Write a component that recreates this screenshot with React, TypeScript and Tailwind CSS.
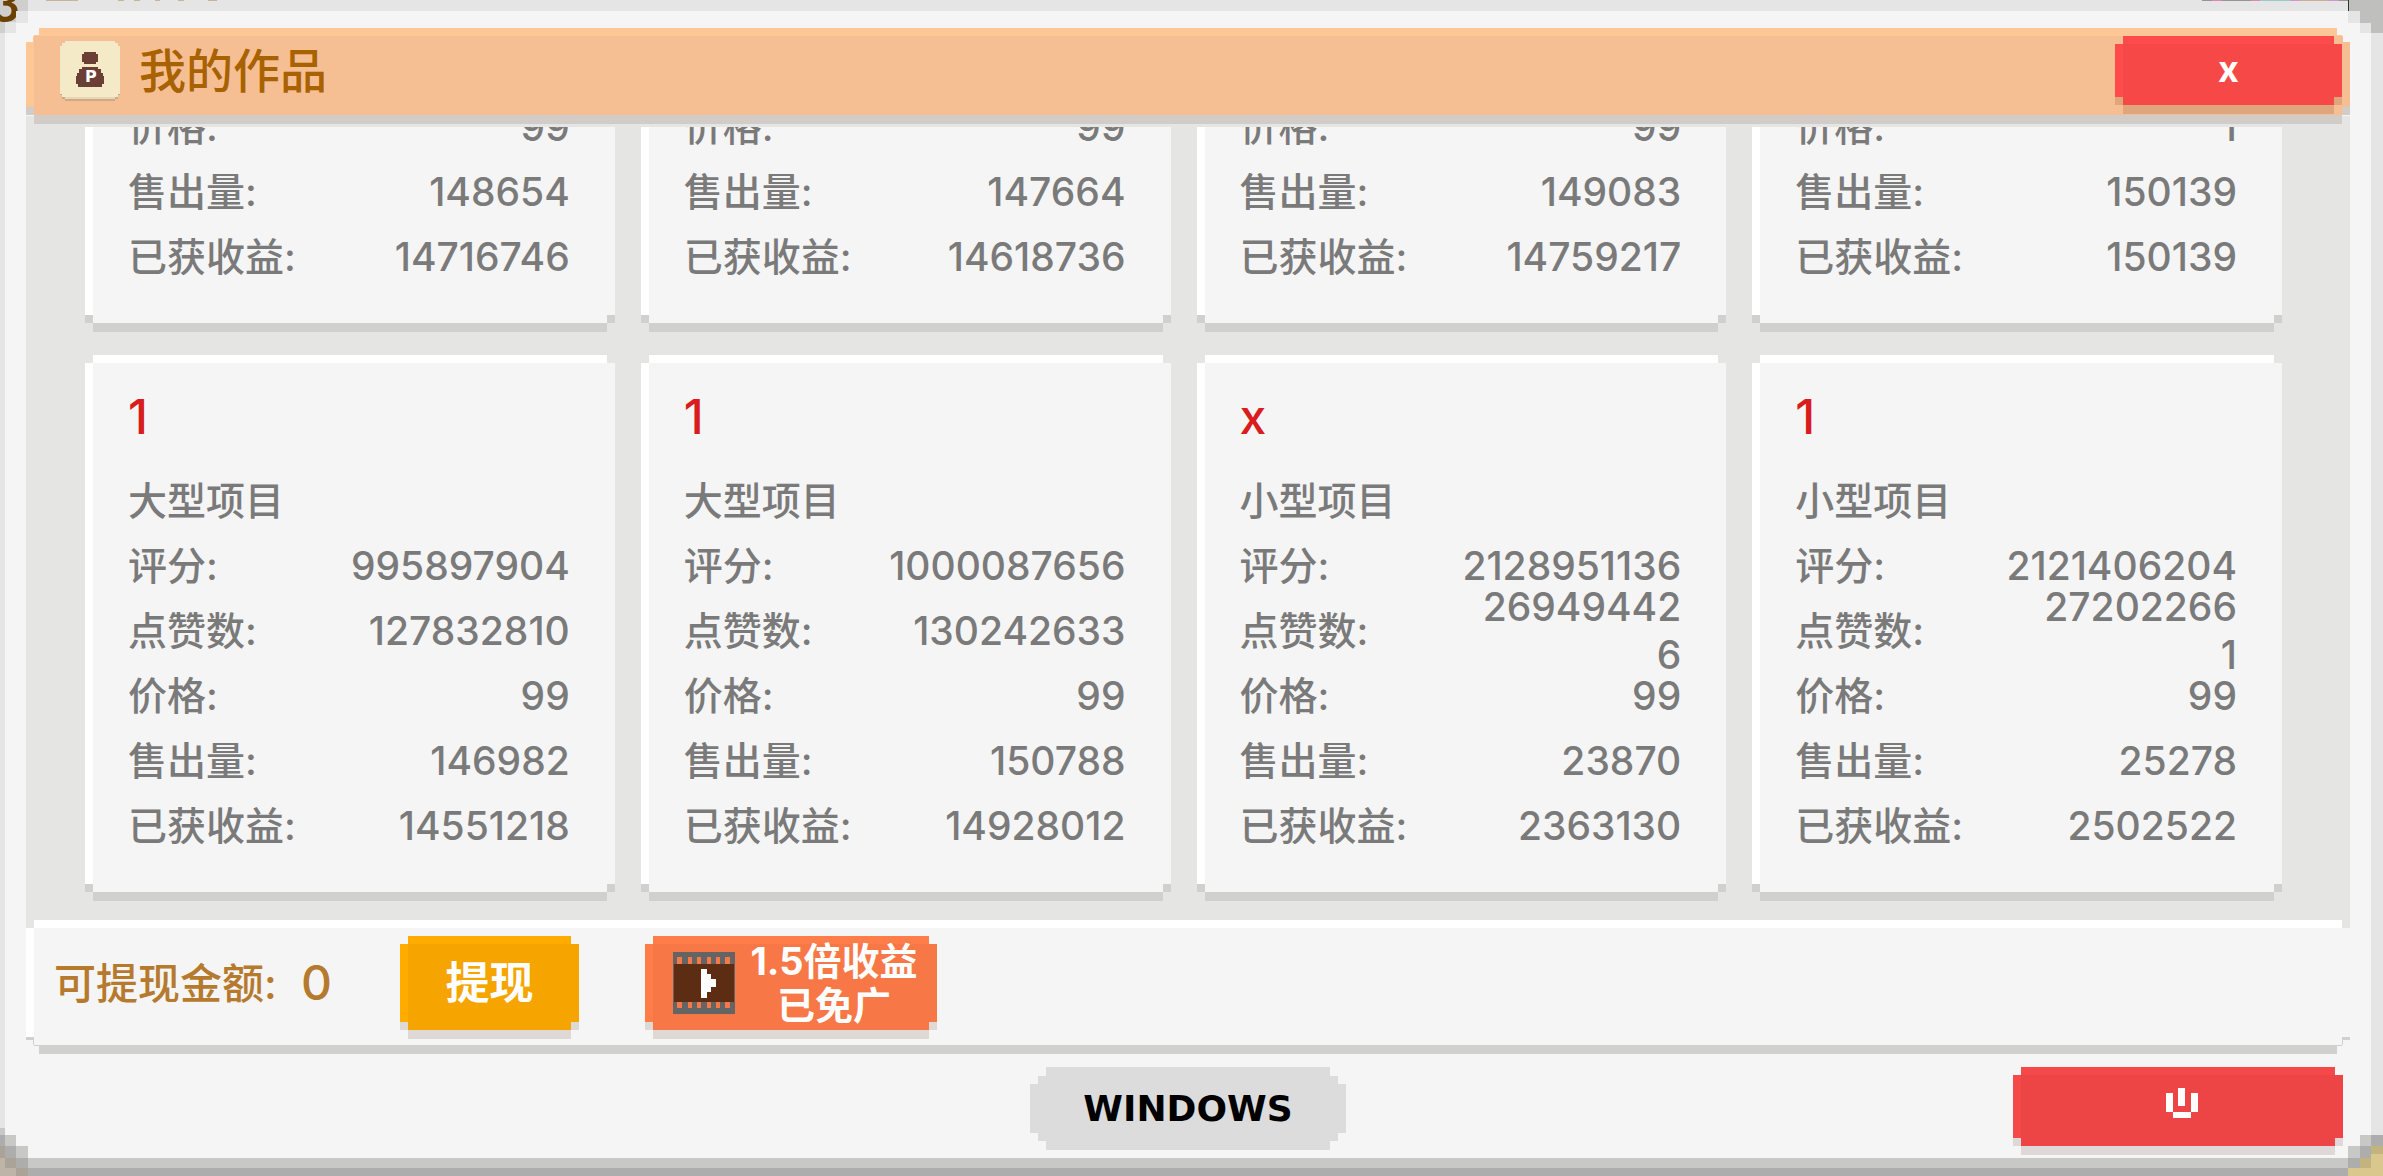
import React from "react";

type Row = { label: string; value: string[] };
type Work = { name?: string; kind?: string; rows: Row[] };

const earlierWork = (price: string, sold: string, income: string): Work => ({
  rows: [
    { label: "价格", value: [price] },
    { label: "售出量", value: [sold] },
    { label: "已获收益", value: [income] },
  ],
});

const works: Work[] = [
  earlierWork("99", "148654", "14716746"),
  earlierWork("99", "147664", "14618736"),
  earlierWork("99", "149083", "14759217"),
  earlierWork("1", "150139", "150139"),
  {
    name: "1",
    kind: "大型项目",
    rows: [
      { label: "评分", value: ["995897904"] },
      { label: "点赞数", value: ["127832810"] },
      { label: "价格", value: ["99"] },
      { label: "售出量", value: ["146982"] },
      { label: "已获收益", value: ["14551218"] },
    ],
  },
  {
    name: "1",
    kind: "大型项目",
    rows: [
      { label: "评分", value: ["1000087656"] },
      { label: "点赞数", value: ["130242633"] },
      { label: "价格", value: ["99"] },
      { label: "售出量", value: ["150788"] },
      { label: "已获收益", value: ["14928012"] },
    ],
  },
  {
    name: "x",
    kind: "小型项目",
    rows: [
      { label: "评分", value: ["2128951136"] },
      { label: "点赞数", value: ["26949442", "6"] },
      { label: "价格", value: ["99"] },
      { label: "售出量", value: ["23870"] },
      { label: "已获收益", value: ["2363130"] },
    ],
  },
  {
    name: "1",
    kind: "小型项目",
    rows: [
      { label: "评分", value: ["2121406204"] },
      { label: "点赞数", value: ["27202266", "1"] },
      { label: "价格", value: ["99"] },
      { label: "售出量", value: ["25278"] },
      { label: "已获收益", value: ["2502522"] },
    ],
  },
];

// Pixel-art box: notched corners, light top and left edges, and a drop shadow in the last 9px.
const pixelBox =
  "bg-no-repeat bg-[linear-gradient(var(--hi),var(--hi)),linear-gradient(var(--hi),var(--hi)),linear-gradient(var(--body),var(--body)),linear-gradient(var(--body),var(--body)),linear-gradient(var(--sh),var(--sh)),linear-gradient(var(--sh),var(--sh))] [background-size:calc(100%_-_16px)_8px,8px_calc(100%_-_25px),calc(100%_-_8px)_calc(100%_-_25px),calc(100%_-_16px)_calc(100%_-_17px),100%_8px,calc(100%_-_16px)_9px] [background-position:8px_0,0_8px,8px_8px,8px_8px,0_calc(100%_-_9px),8px_100%]";

const lightBox = "[--hi:#ffffff] [--body:#f5f5f5] [--sh:#d0d0ce]";

function MoneyBag() {
  return (
    <svg width="60" height="60" viewBox="0 0 60 60" shapeRendering="crispEdges" aria-hidden="true">
      <path d="M2 58V54H0V52H60V54H58V58H55V60H5V58Z" fill="#cfa887" />
      <path d="M5 0H55V2H58V5H60V53H58V56H55V58H5V56H2V53H0V5H2V2H5Z" fill="#f5eac8" />
      <path d="M5 56H55V58H5Z" fill="#e6d9b1" />
      <path d="M24 11H36V13H38V21H36V23H24V21H22V13H24Z" fill="#6b3f35" />
      <path d="M22 26H38V28H41V32H43V35H44V43H42V46H18V43H16V35H17V32H19V28H22Z" fill="#6b3f35" />
      <text x="25" y="41" fill="#fff" className="font-['DejaVu_Sans',sans-serif] text-[16px] font-bold">
        P
      </text>
    </svg>
  );
}

function Film() {
  const holes = [
    [4, 5],
    [15, 4],
    [24, 4],
    [34, 4],
    [43, 4],
    [52, 5],
  ];
  return (
    <svg width="62" height="62" viewBox="0 0 62 62" shapeRendering="crispEdges" aria-hidden="true" className="shrink-0">
      <path d="M0 0H62V62H0Z" fill="#646464" />
      <path d="M1 12H61V50H1Z" fill="#5c2d12" />
      {holes.map(([x, w]) => (
        <path key={x} d={`M${x} 5h${w}v7h-${w}zM${x} 50h${w}v6h-${w}z`} fill="#f77846" />
      ))}
      <path d="M28 17H34V22H38V27H43V35H38V40H34V46H28Z" fill="#fff" />
    </svg>
  );
}

function Power() {
  return (
    <svg width="32" height="30" viewBox="0 0 32 30" shapeRendering="crispEdges" aria-hidden="true">
      <path d="M0 5H7V24H0ZM25 5H32V24H25ZM12 0H19V18H12ZM7 24H25V30H7Z" fill="#fff" />
    </svg>
  );
}

// Stair-stepped window corners with the desktop showing behind them.
function Corners() {
  return (
    <div aria-hidden="true" className="pointer-events-none">
      <svg className="absolute left-0 top-0" width="240" height="34" shapeRendering="crispEdges">
        <path d="M0 0H28V11H16V22H16V33H0Z" fill="#cfcfcd" />
        <path d="M46 0H78V1H46ZM118 0H124V1H118ZM134 0H140V1H134ZM155 0H160V1H155ZM178 0H184V1H178ZM208 0H217V1H208Z" fill="#c8b49a" />
        <text x="-9" y="22" fill="#6b4200" className="font-['Lato',sans-serif] text-[50px] font-bold">
          3
        </text>
        <path d="M16 11H28V23H16ZM5 22H16V33H5Z" fill="#e5e5e5" />
      </svg>
      <svg className="absolute right-0 top-0" width="181" height="34" shapeRendering="crispEdges">
        <path d="M146 0H181V33H169V23H158V11H146Z" fill="#bfbfbd" />
        <path d="M0 0H146V1H0Z" fill="#959593" />
        <path d="M10 0H20V1H10ZM49 0H58V1H49Z" fill="#dd86b4" />
        <path d="M58 0H88V1H58Z" fill="#96ccc6" />
        <path d="M88 0H97V1H88ZM126 0H137V1H126Z" fill="#d592cf" />
        <path d="M97 0H126V1H97Z" fill="#ceae96" />
        <path d="M146 0H147V11H146Z" fill="#333" />
        <path d="M146 11H158V23H146ZM158 23H169V33H158Z" fill="#e5e5e5" />
      </svg>
      <svg className="absolute bottom-0 left-0" width="28" height="48" shapeRendering="crispEdges">
        <path d="M0 0H5V7H16V18H28V48H0Z" fill="#c8c8c6" />
        <path d="M0 7H5V18H16V30H28V48H0Z" fill="#adadad" />
        <path d="M0 18H5V30H16V40H28V48H0Z" fill="#aca398" />
        <path d="M0 30H5V40H16V48H0Z" fill="#bfb4a8" />
      </svg>
      <svg className="absolute bottom-0 right-0" width="35" height="41" shapeRendering="crispEdges">
        <path d="M12 0H35V41H0V11H12Z" fill="#c8c8c6" />
        <path d="M23 0H35V11H23V23H12V33H0V23H12V11H23Z" fill="#adadad" />
        <path d="M12 23H23V11H35V41H0V33H12Z" fill="#c2b37f" />
        <path d="M23 19H35V41H0V33H12V41H12V33H23Z" fill="#dac78e" />
      </svg>
    </div>
  );
}

function WorkCard({ work }: { work: Work }) {
  return (
    <article className={`${pixelBox} ${lightBox} flex flex-col justify-end pb-[43px] pl-[43px] pr-[45px] pt-5 text-[39px] leading-[48px] text-[#7a7a7a]`}>
      {work.name && <h2 className="mb-[9px] flex h-[84px] items-center text-[48px] text-[#d91c1c]">{work.name}</h2>}
      {work.kind && <p className="flex h-[65px] items-center">{work.kind}</p>}
      <dl>
        {work.rows.map((row) => (
          <div key={row.label} className="flex h-[65px] items-center justify-between">
            <dt>{row.label}:</dt>
            <dd className="text-right">
              {row.value.map((line) => (
                <span key={line} className="block">
                  {line}
                </span>
              ))}
            </dd>
          </div>
        ))}
      </dl>
    </article>
  );
}

export default function App() {
  return (
    <div className="relative flex h-screen flex-col overflow-hidden bg-[#f5f5f5] font-['Inter','Noto_Sans_CJK_SC',sans-serif] font-medium">
      <div className="flex min-h-0 grow flex-col border-l-[5px] border-r-[12px] border-t-[11px] border-[#e5e5e5] px-[21px] pt-[17px]">
        <header
          className={`${pixelBox} relative z-10 flex h-24 shrink-0 items-start pl-[34px] pr-2 pt-2 [--body:#f6bf93] [--hi:#ffc795] [--sh:#d1ccc8] [clip-path:polygon(0_14px,7px_14px,7px_7px,13px_7px,13px_0,calc(100%_-_13px)_0,calc(100%_-_13px)_7px,calc(100%_-_7px)_7px,calc(100%_-_7px)_14px,100%_14px,100%_100%,0_100%)]`}
        >
          <div className="flex grow items-center gap-[19px] pt-[5px]">
            <MoneyBag />
            <h1 className="text-[47px] leading-[60px] text-[#a86200]">我的作品</h1>
          </div>
          <button
            type="button"
            aria-label="关闭"
            className={`${pixelBox} h-[78px] w-[227px] pb-[13px] text-[36px] font-bold leading-none text-white [--body:#f74848] [--hi:#ff4b4b] [--sh:#dfa57d]`}
          >
            x
          </button>
        </header>

        <main className="-mt-2 flex min-h-0 grow flex-col justify-end overflow-hidden border-t-[11px] border-[#e5e5e3] bg-[#e5e5e3] pb-[27px] pl-[59px] pr-[68px]">
          <div className="grid grid-cols-4 gap-x-[26px] gap-y-[23px]">
            {works.map((work, i) => (
              <WorkCard key={i} work={work} />
            ))}
          </div>
        </main>

        <section
          className={`${pixelBox} ${lightBox} -mt-2 flex h-[134px] shrink-0 items-start pl-7 pt-4 [clip-path:polygon(0_0,100%_0,100%_120px,calc(100%_-_7px)_120px,calc(100%_-_7px)_126px,calc(100%_-_13px)_126px,calc(100%_-_13px)_100%,13px_100%,13px_126px,7px_126px,7px_120px,0_120px)]`}
        >
          <p className="mr-[68px] flex h-[94px] w-[278px] items-center justify-between whitespace-nowrap text-[42px] text-[#b57a2e]">
            可提现金额:<span className="text-[48px]">0</span>
          </p>
          <button
            type="button"
            className={`${pixelBox} mr-[66px] h-[103px] w-[179px] pb-[9px] text-[44px] font-bold text-white [--body:#f5a400] [--hi:#ffab00] [--sh:#dfd9d6]`}
          >
            提现
          </button>
          <button
            type="button"
            className={`${pixelBox} flex h-[103px] w-[292px] items-center pb-[9px] pl-7 text-[38px] font-bold leading-[44px] text-white [--body:#f77846] [--hi:#ff7d49] [--sh:#dfd9d6]`}
          >
            <Film />
            <span className="grow whitespace-nowrap pr-1 text-center">
              1.5倍收益
              <br />
              已免广
            </span>
          </button>
        </section>

        <footer className="grid h-[104px] shrink-0 grid-cols-3 items-start pt-[13px]">
          <button
            type="button"
            className="col-start-2 h-[83px] w-[316px] justify-self-center bg-[#dcdcdc] font-['DejaVu_Sans',sans-serif] text-[36px] font-bold text-black [clip-path:polygon(0_17px,8px_17px,8px_9px,16px_9px,16px_0,calc(100%_-_16px)_0,calc(100%_-_16px)_9px,calc(100%_-_8px)_9px,calc(100%_-_8px)_17px,100%_17px,100%_66px,calc(100%_-_8px)_66px,calc(100%_-_8px)_74px,calc(100%_-_16px)_74px,calc(100%_-_16px)_100%,16px_100%,16px_74px,8px_74px,8px_66px,0_66px)]"
          >
            WINDOWS
          </button>
          <button
            type="button"
            aria-label="关机"
            className={`${pixelBox} mr-[7px] flex h-[88px] w-[330px] items-center justify-center justify-self-end pb-4 pl-2 [--body:#ed4545] [--hi:#f54848] [--sh:#dfd8d8]`}
          >
            <Power />
          </button>
        </footer>
      </div>
      <div className="h-[18px] shrink-0 border-b-8 border-[#adadad] bg-[#c8c8c6]" />
      <Corners />
    </div>
  );
}
